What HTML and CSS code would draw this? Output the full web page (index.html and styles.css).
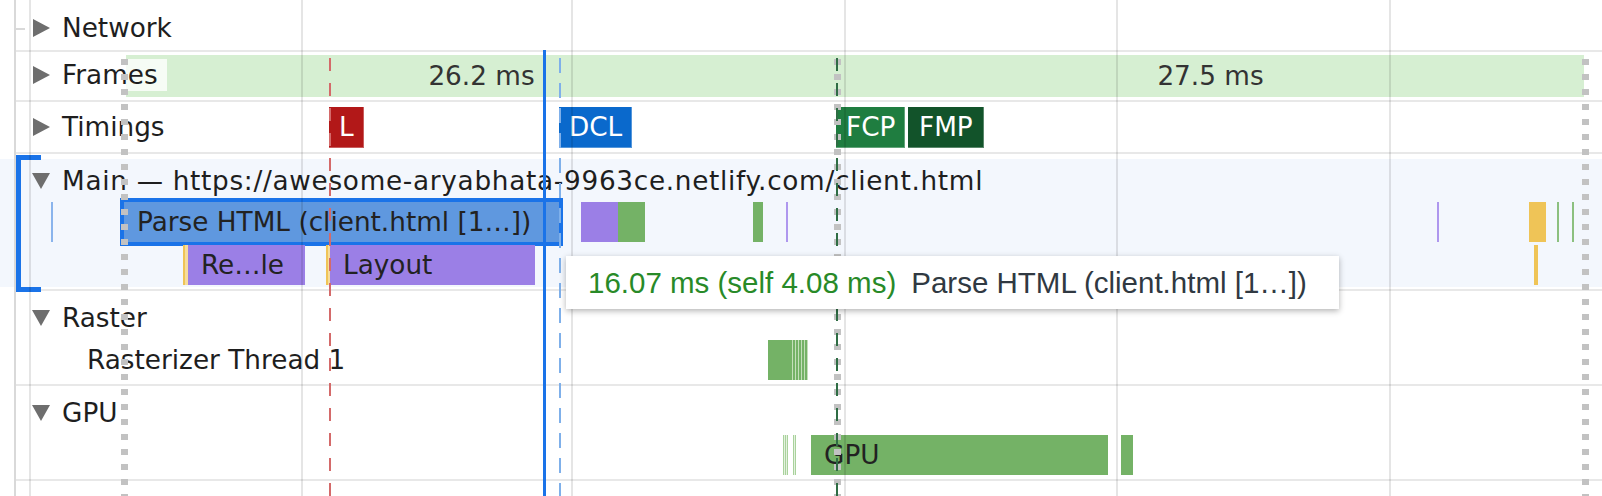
FILE: index.html
```html
<!DOCTYPE html>
<html lang="en">
<head>
<meta charset="utf-8">
<title>Performance timeline</title>
<link rel="stylesheet" href="styles.css">
</head>
<body>
<div class="timeline">
  <section class="track track-network">
    <div class="track-header">
      <svg class="arrow" width="18" height="20" viewBox="0 0 18 20"><path d="M1 1 L18 10 L1 19 Z"/></svg>
      <span class="track-title">Network</span>
    </div>
  </section>

  <section class="track track-frames">
    <div class="frames-band" style="left:126px;width:1458px">
      <div class="frame" style="width:711px">26.2 ms</div>
      <div class="frame" style="width:747px">27.5 ms</div>
    </div>
    <div class="track-header">
      <svg class="arrow" width="18" height="20" viewBox="0 0 18 20"><path d="M1 1 L18 10 L1 19 Z"/></svg>
      <span class="track-title title-boxed">Frames</span>
    </div>
  </section>

  <section class="track track-timings">
    <div class="track-header">
      <svg class="arrow" width="18" height="20" viewBox="0 0 18 20"><path d="M1 1 L18 10 L1 19 Z"/></svg>
      <span class="track-title">Timings</span>
    </div>
    <span class="marker marker-load" style="left:329px">L</span>
    <span class="marker marker-dcl" style="left:559px">DCL</span>
    <span class="marker marker-fcp" style="left:836px">FCP</span>
    <span class="marker marker-fmp" style="left:908px">FMP</span>
  </section>

  <section class="track track-main">
    <div class="group-body">
      <div class="track-header">
        <svg class="arrow" width="18" height="16" viewBox="0 0 18 16"><path d="M0 0 H18 L9 16 Z"/></svg>
        <span class="track-title title-url">Main — https://awesome-aryabhata-9963ce.netlify.com/client.html</span>
      </div>
      <div class="lane">
        <div class="bar c-loading-thin" style="left:51px;width:2px"></div>
        <div class="bar c-loading selected" style="left:124px;width:435px"><span class="bar-label">Parse HTML (client.html [1…])</span></div>
        <div class="bar c-rendering" style="left:581px;width:37px"></div>
        <div class="bar c-painting" style="left:618px;width:27px"></div>
        <div class="bar c-painting" style="left:753px;width:10px"></div>
        <div class="bar c-rendering-thin" style="left:786px;width:2px"></div>
        <div class="bar c-rendering-thin" style="left:1437px;width:2px"></div>
        <div class="bar c-scripting" style="left:1529px;width:17px"></div>
        <div class="bar c-painting-thin" style="left:1557px;width:2px"></div>
        <div class="bar c-painting-thin" style="left:1572px;width:2px"></div>
      </div>
      <div class="lane lane-second">
        <div class="bar c-scripting" style="left:183px;width:2px"></div>
        <div class="bar c-scripting-pale" style="left:185px;width:3px"></div>
        <div class="bar c-rendering" style="left:188px;width:117px"><span class="bar-label">Re…le</span></div>
        <div class="bar c-scripting" style="left:326px;width:2px"></div>
        <div class="bar c-scripting-pale" style="left:328px;width:2px"></div>
        <div class="bar c-rendering" style="left:330px;width:205px"><span class="bar-label">Layout</span></div>
        <div class="bar c-scripting" style="left:1534px;width:4px"></div>
      </div>
    </div>
    <div class="bracket"></div>
  </section>

  <section class="track track-raster">
    <div class="track-header">
      <svg class="arrow" width="18" height="16" viewBox="0 0 18 16"><path d="M0 0 H18 L9 16 Z"/></svg>
      <span class="track-title">Raster</span>
    </div>
    <div class="lane">
      <span class="lane-label">Rasterizer Thread 1</span>
      <div class="bar c-painting" style="left:768px;width:22px"></div>
      <div class="bar c-painting-striped" style="left:790px;width:18px"></div>
    </div>
  </section>

  <section class="track track-gpu">
    <div class="track-header">
      <svg class="arrow" width="18" height="16" viewBox="0 0 18 16"><path d="M0 0 H18 L9 16 Z"/></svg>
      <span class="track-title">GPU</span>
    </div>
    <div class="lane">
      <div class="bar c-painting-striped light" style="left:783px;width:5px"></div>
      <div class="bar c-painting-striped light" style="left:793px;width:3px"></div>
      <div class="bar c-painting" style="left:811px;width:297px"><span class="bar-label">GPU</span></div>
      <div class="bar c-painting" style="left:1121px;width:12px"></div>
    </div>
  </section>

  <div class="overlay">
    <div class="tree-line"></div>
    <div class="tree-tick"></div>
    <div class="grid-line" style="left:29px"></div>
    <div class="grid-line" style="left:301px"></div>
    <div class="grid-line" style="left:571px"></div>
    <div class="grid-line" style="left:844px"></div>
    <div class="grid-line" style="left:1116px"></div>
    <div class="grid-line" style="left:1389px"></div>
    <div class="frame-divider" style="left:121px"></div>
    <div class="frame-divider" style="left:834px"></div>
    <div class="frame-divider" style="left:1582px"></div>
    <div class="dash dash-load" style="left:329px"></div>
    <div class="dash dash-dcl" style="left:559px"></div>
    <div class="dash dash-paint" style="left:836px"></div>
    <div class="cursor-line" style="left:543px"></div>
  </div>

  <div class="tooltip">
    <span class="tip-time">16.07 ms (self 4.08 ms)</span><span class="tip-title">Parse HTML (client.html [1…])</span>
  </div>
</div>
</body>
</html>
```

FILE: styles.css
```css
* { box-sizing: border-box; }

html, body {
  margin: 0;
  padding: 0;
}

body {
  width: 1602px;
  height: 496px;
  overflow: hidden;
  background: #fff;
  font-family: "DejaVu Sans", Verdana, sans-serif;
  font-size: 26.3px;
  color: #1e1e1e;
}

.timeline {
  position: relative;
  width: 1602px;
  height: 496px;
}

/* ---------- tracks ---------- */
.track {
  position: relative;
  box-sizing: content-box;
  padding-bottom: 2px;
}

.track::after {
  content: "";
  position: absolute;
  left: 15px;
  right: 0;
  bottom: 0;
  height: 2px;
  background: #e8e8e8;
}

.track-network { padding-top: 6px; height: 44px; }
.track-frames  { height: 48px; }
.track-timings { padding-top: 3px; height: 47px; }
.track-main    { padding-top: 5px; height: 130px; }
.track-raster,
.track-gpu     { padding-top: 5px; height: 88px; }

.track-header {
  position: relative;
  z-index: 1;
  display: flex;
  align-items: center;
  height: 44px;
  padding-left: 32px;
  white-space: nowrap;
}

.track-frames .track-header { height: 46px; }
.track-main .track-header { height: 43px; }

.arrow {
  flex: none;
  margin-right: 12px;
  fill: #6e6e6e;
}

.track-title { line-height: 32px; }

.title-boxed {
  height: 32px;
  padding-right: 9px;
  background: rgba(255, 255, 255, 0.78);
}

.title-url { letter-spacing: 0.7px; }

/* ---------- frames ---------- */
.frames-band {
  position: absolute;
  top: 3px;
  height: 42px;
  display: flex;
  background: #d6efd2;
  color: #333;
}

.frame {
  display: flex;
  align-items: center;
  justify-content: center;
  flex: none;
}

/* ---------- timing markers ---------- */
.marker {
  position: absolute;
  top: 5px;
  height: 41px;
  padding: 0 10px;
  line-height: 41px;
  color: #fff;
  box-shadow: inset -1px -1px 0 rgba(255, 255, 255, 0.3);
}

.marker-load { background: #b21818; }
.marker-dcl  { background: #0a69cc; padding: 0 10px; }
.marker-fcp  { background: #1f7d40; padding: 0 10px; }
.marker-fmp  { background: #12532a; padding: 0 11px; }

/* ---------- main group ---------- */
.group-body {
  height: 128px;
  background: #f3f7fd;
}

.bracket {
  position: absolute;
  left: 16px;
  top: 1px;
  width: 25px;
  height: 137px;
  border: 5px solid #1a73e8;
  border-right: none;
  z-index: 2;
}

/* ---------- lanes and bars ---------- */
.lane {
  position: relative;
  height: 40px;
}

.lane-second { margin-top: 3px; }

.lane-label {
  display: block;
  padding-left: 87px;
  line-height: 40px;
  white-space: nowrap;
}

.bar {
  position: absolute;
  top: 0;
  height: 40px;
  overflow: hidden;
}

.bar-label {
  display: block;
  padding-left: 13px;
  line-height: 40px;
  white-space: nowrap;
  color: #222;
}

.c-loading { background: #5f98df; }
.c-loading-thin { background: #8ab4ec; }
.c-rendering { background: #9b7fe6; }
.c-rendering-thin { background: #ae97ee; }
.c-painting { background: #74b266; }
.c-painting-thin { background: #8cc07f; }
.c-scripting { background: #efc457; }
.c-scripting-pale { background: #f6dc9c; }

.c-painting-striped {
  background: repeating-linear-gradient(to right, #74b266 0 2px, #c3dfb9 2px 3px);
}

.c-painting-striped.light {
  background: repeating-linear-gradient(to right, #a9d29c 0 1px, #e4f1df 1px 2px);
}

.selected {
  outline: 4px solid #1a73e8;
}

/* ---------- overlay ---------- */
.overlay {
  position: absolute;
  inset: 0;
  pointer-events: none;
  z-index: 3;
}

.tree-line {
  position: absolute;
  left: 14px;
  top: 0;
  bottom: 0;
  width: 2px;
  background: #d9d9d9;
}

.tree-tick {
  position: absolute;
  left: 14px;
  top: 28px;
  width: 11px;
  height: 2px;
  background: #d9d9d9;
}

.grid-line {
  position: absolute;
  top: 0;
  bottom: 0;
  width: 2px;
  background: rgba(0, 0, 0, 0.1);
}

.frame-divider {
  position: absolute;
  top: 59px;
  bottom: 0;
  width: 7px;
  background: repeating-linear-gradient(to bottom, #c2c2c2 0 6px, transparent 6px 15px);
}

.dash {
  position: absolute;
  top: 58px;
  bottom: 0;
  width: 2px;
}

.dash-load {
  background: repeating-linear-gradient(to bottom, #d46a6a 0 13px, transparent 13px 25px);
}

.dash-dcl {
  background: repeating-linear-gradient(to bottom, #7fb0ea 0 15px, transparent 15px 25px);
}

.dash-paint {
  background: repeating-linear-gradient(to bottom, #2f6d44 0 13px, transparent 13px 25px);
}

.cursor-line {
  position: absolute;
  top: 50px;
  bottom: 0;
  width: 3px;
  background: #1a73e8;
}

/* ---------- tooltip ---------- */
.tooltip {
  position: absolute;
  left: 566px;
  top: 256px;
  z-index: 4;
  height: 53px;
  padding: 10px 32px 10px 22px;
  background: #fff;
  box-shadow: 0 2px 6px rgba(0, 0, 0, 0.3);
  font-family: "Liberation Sans", Arial, sans-serif;
  font-size: 29.5px;
  line-height: 33px;
  white-space: nowrap;
}

.tip-time {
  color: #288a28;
  margin-right: 15px;
}

.tip-title { color: #303942; }
```
